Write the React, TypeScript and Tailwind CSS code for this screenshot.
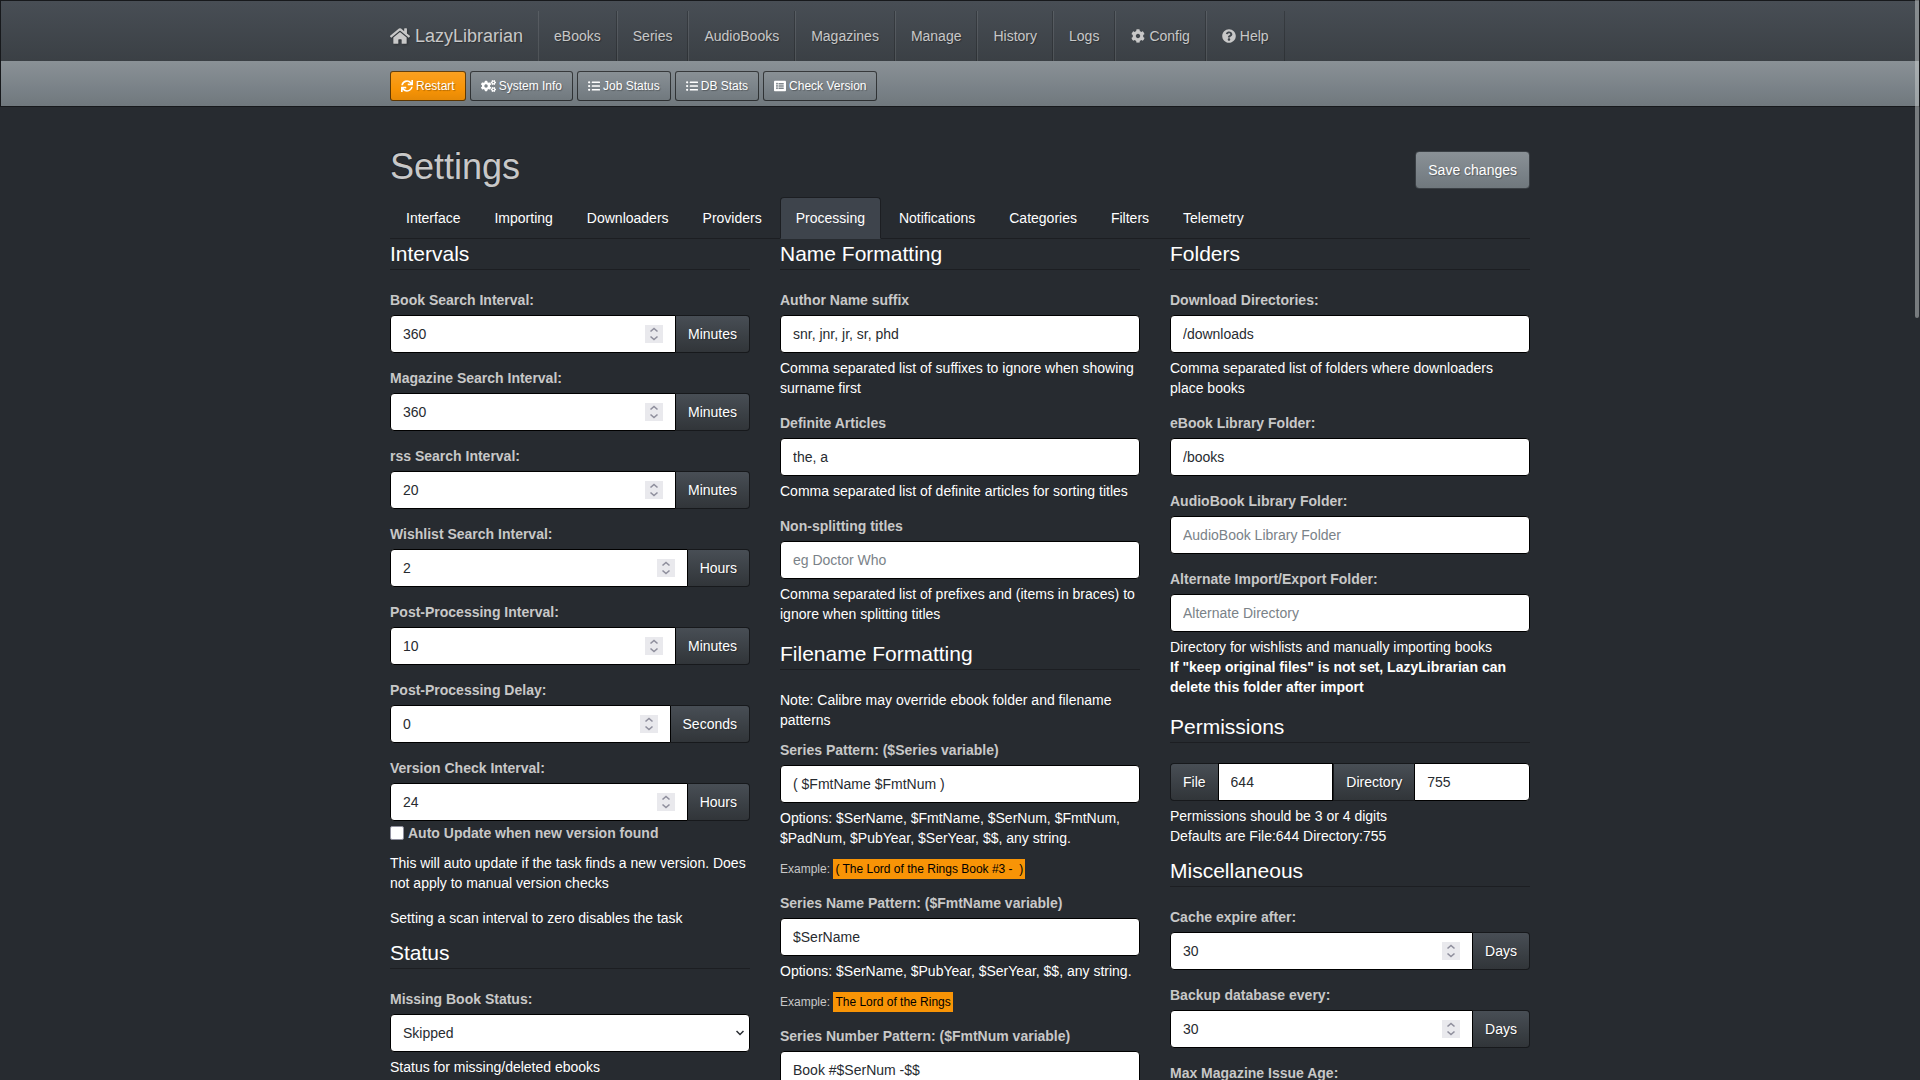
import React, { useId } from "react";
import { clsx } from "clsx";
import {
  FaCog,
  FaCogs,
  FaHome,
  FaListAlt,
  FaListUl,
  FaQuestionCircle,
  FaSync,
} from "react-icons/fa";

type NavLink = {
  title: string;
  icon?: React.ReactNode;
};

const navLinks: NavLink[] = [
  { title: "eBooks" },
  { title: "Series" },
  { title: "AudioBooks" },
  { title: "Magazines" },
  { title: "Manage" },
  { title: "History" },
  { title: "Logs" },
  { title: "Config", icon: <FaCog /> },
  { title: "Help", icon: <FaQuestionCircle /> },
];

const actions: NavLink[] = [
  { title: "System Info", icon: <FaCogs className="h-3 w-[15px]" /> },
  { title: "Job Status", icon: <FaListUl /> },
  { title: "DB Stats", icon: <FaListUl /> },
  { title: "Check Version", icon: <FaListAlt /> },
];

const tabs = [
  "Interface",
  "Importing",
  "Downloaders",
  "Providers",
  "Processing",
  "Notifications",
  "Categories",
  "Filters",
  "Telemetry",
];

const shadow = "[text-shadow:1px_1px_1px_rgba(0,0,0,0.3)]";
const defaultFill = "bg-[linear-gradient(#8a9196,#7a8288_60%,#70787d)]";
const addonFill = "bg-[linear-gradient(#484e55,#3a3f44_60%,#313539)]";
const control =
  "h-[38px] w-full min-w-0 border border-black bg-white px-3 text-sm leading-5 text-[#272b30] outline-none placeholder:text-[#7a8288] placeholder:opacity-100";

const Header = () => (
  <header className={clsx("border border-[#17191c]", addonFill, shadow)}>
    <div className="pt-2.5">
      <nav className="mx-auto flex max-w-[1140px] items-center">
        <a href="#" className="flex h-[50px] items-center gap-[5px] pr-[15px] text-lg leading-5">
          <FaHome className="h-[18px] w-5 drop-shadow-[1px_1px_1px_rgba(0,0,0,0.3)]" />
          LazyLibrarian
        </a>
        <ul className="flex">
          {navLinks.map((link) => (
            <li key={link.title}>
              <a
                href="#"
                className="flex h-[50px] items-center gap-1 border-r border-l border-r-black/20 border-l-white/10 px-[15px]"
              >
                {link.icon}
                {link.title}
              </a>
            </li>
          ))}
        </ul>
      </nav>
    </div>
    <div className={defaultFill}>
      <div className="mx-auto flex max-w-[1140px] gap-1 pt-2.5 pb-[5px] text-xs text-white">
        <button
          type="button"
          className={clsx(
            "flex h-[30px] items-center gap-[3px] rounded-[3px] border border-black/60 bg-[linear-gradient(#faa123,#f89406_60%,#e48806)] bg-origin-border px-2.5",
            shadow,
          )}
        >
          <FaSync />
          Restart
        </button>
        {actions.map((action) => (
          <button
            key={action.title}
            type="button"
            className={clsx(
              "flex h-[30px] items-center gap-[3px] rounded-[3px] border border-black/60 bg-origin-border px-2.5",
              defaultFill,
              shadow,
            )}
          >
            {action.icon}
            {action.title}
          </button>
        ))}
      </div>
    </div>
  </header>
);

const Tabs = () => (
  <ul className="flex gap-0.5 border-b border-[#1c1e22] text-white">
    {tabs.map((tab) => (
      <li key={tab} className="-mb-px">
        <a
          href="#"
          className={clsx(
            "block rounded-t-sm border px-[15px] py-2.5",
            tab === "Processing"
              ? "border-[#1c1e22] border-b-[#3e444c] bg-[#3e444c]"
              : "border-transparent",
          )}
        >
          {tab}
        </a>
      </li>
    ))}
  </ul>
);

type SectionProps = {
  title: string;
  children: React.ReactNode;
};

const Section = ({ title, children }: SectionProps) => (
  <section>
    <h2 className="mb-5 border-b border-[#1c1e22] text-[21px] leading-[30px] text-white">
      {title}
    </h2>
    {children}
  </section>
);

const Help = ({ children }: { children: React.ReactNode }) => (
  <p className="mt-[5px] text-white">{children}</p>
);

const Example = ({ children }: { children: React.ReactNode }) => (
  <p className="mt-2.5">
    <small className="text-xs leading-4">
      Example:{" "}
      <mark className="bg-[#f89406] px-0.5 py-[3px] whitespace-pre text-black">{children}</mark>
    </small>
  </p>
);

type FieldProps = {
  label: string;
  value?: string;
  placeholder?: string;
  children?: React.ReactNode;
};

const TextField = ({ label, value, placeholder, children }: FieldProps) => {
  const id = useId();
  return (
    <div className="mb-[15px]">
      <label htmlFor={id} className="mb-[5px] block font-bold">
        {label}
      </label>
      <input
        id={id}
        type="text"
        defaultValue={value}
        placeholder={placeholder}
        className={clsx(control, "block rounded-sm")}
      />
      {children}
    </div>
  );
};

const Addon = ({ className, ...props }: React.ComponentPropsWithoutRef<"span">) => (
  <span
    className={clsx(
      "flex h-[38px] items-center border border-[#17191c] px-3 text-white",
      addonFill,
      shadow,
      className,
    )}
    {...props}
  />
);

type NumberFieldProps = {
  label: string;
  value: string;
  unit: string;
  last?: boolean;
};

const NumberField = ({ label, value, unit, last }: NumberFieldProps) => {
  const id = useId();
  return (
    <div className={clsx(!last && "mb-[15px]")}>
      <label htmlFor={id} className="mb-[5px] block font-bold">
        {label}
      </label>
      <div className="flex">
        <div className="relative flex-1">
          <input
            id={id}
            type="number"
            defaultValue={value}
            className={clsx(
              control,
              "block appearance-none rounded-l-sm [&::-webkit-inner-spin-button]:appearance-none",
            )}
          />
          <svg
            viewBox="0 0 18 18"
            className="pointer-events-none absolute top-2.5 right-[13px] size-[18px] bg-[#e9e9ed]"
            fill="none"
            stroke="#8f8f9d"
            strokeWidth="1.6"
          >
            <path d="M5.5 6.5 9 3.5l3.5 3M5.5 11.5l3.5 3 3.5-3" />
          </svg>
        </div>
        <Addon className="rounded-r-sm border-l-0">{unit}</Addon>
      </div>
    </div>
  );
};

const SelectField = ({ label, value, children }: FieldProps) => {
  const id = useId();
  return (
    <div className="mb-[15px]">
      <label htmlFor={id} className="mb-[5px] block font-bold">
        {label}
      </label>
      <div className="relative">
        <select id={id} className={clsx(control, "block appearance-none rounded-sm")}>
          <option>{value}</option>
        </select>
        <svg
          viewBox="0 0 8 6"
          className="pointer-events-none absolute top-4 right-1.5 h-1.5 w-2"
          fill="none"
          stroke="#272b30"
          strokeWidth="1.5"
        >
          <path d="M.5 1 4 4.5 7.5 1" />
        </svg>
      </div>
      {children}
    </div>
  );
};

const IntervalsColumn = () => (
  <div>
    <Section title="Intervals">
      <NumberField label="Book Search Interval:" value="360" unit="Minutes" />
      <NumberField label="Magazine Search Interval:" value="360" unit="Minutes" />
      <NumberField label="rss Search Interval:" value="20" unit="Minutes" />
      <NumberField label="Wishlist Search Interval:" value="2" unit="Hours" />
      <NumberField label="Post-Processing Interval:" value="10" unit="Minutes" />
      <NumberField label="Post-Processing Delay:" value="0" unit="Seconds" />
      <NumberField label="Version Check Interval:" value="24" unit="Hours" last />
      <label className="mt-0.5 mb-2.5 flex items-center gap-1 font-bold">
        <input
          type="checkbox"
          className="size-3.5 appearance-none rounded-xs border border-[#8f8f9d] bg-white"
        />
        Auto Update when new version found
      </label>
      <p className="mb-[15px] text-white">
        This will auto update if the task finds a new version. Does not apply to manual version
        checks
      </p>
      <p className="mb-2.5 text-white">Setting a scan interval to zero disables the task</p>
    </Section>
    <Section title="Status">
      <SelectField label="Missing Book Status:" value="Skipped">
        <Help>Status for missing/deleted ebooks</Help>
      </SelectField>
    </Section>
  </div>
);

const FormattingColumn = () => (
  <div>
    <Section title="Name Formatting">
      <TextField label="Author Name suffix" value="snr, jnr, jr, sr, phd">
        <Help>Comma separated list of suffixes to ignore when showing surname first</Help>
      </TextField>
      <TextField label="Definite Articles" value="the, a">
        <Help>Comma separated list of definite articles for sorting titles</Help>
      </TextField>
      <TextField label="Non-splitting titles" placeholder="eg Doctor Who">
        <Help>
          Comma separated list of prefixes and (items in braces) to ignore when splitting titles
        </Help>
      </TextField>
    </Section>
    <Section title="Filename Formatting">
      <p className="mb-2.5 text-white">
        Note: Calibre may override ebook folder and filename patterns
      </p>
      <TextField label="Series Pattern: ($Series variable)" value="( $FmtName $FmtNum )">
        <Help>
          Options: $SerName, $FmtName, $SerNum, $FmtNum, $PadNum, $PubYear, $SerYear, $$, any
          string.
        </Help>
        <Example>{"( The Lord of the Rings Book #3 -  )"}</Example>
      </TextField>
      <TextField label="Series Name Pattern: ($FmtName variable)" value="$SerName">
        <Help>Options: $SerName, $PubYear, $SerYear, $$, any string.</Help>
        <Example>The Lord of the Rings</Example>
      </TextField>
      <TextField label="Series Number Pattern: ($FmtNum variable)" value="Book #$SerNum -$$" />
    </Section>
  </div>
);

const FoldersColumn = () => (
  <div>
    <Section title="Folders">
      <TextField label="Download Directories:" value="/downloads">
        <Help>Comma separated list of folders where downloaders place books</Help>
      </TextField>
      <TextField label="eBook Library Folder:" value="/books" />
      <TextField label="AudioBook Library Folder:" placeholder="AudioBook Library Folder" />
      <TextField label="Alternate Import/Export Folder:" placeholder="Alternate Directory">
        <Help>
          Directory for wishlists and manually importing books
          <br />
          <strong>
            If "keep original files" is not set, LazyLibrarian can delete this folder after import
          </strong>
        </Help>
      </TextField>
    </Section>
    <Section title="Permissions">
      <div className="flex">
        <Addon id="file-perm" className="rounded-l-sm border-r-0">
          File
        </Addon>
        <input
          type="text"
          aria-labelledby="file-perm"
          defaultValue="644"
          className={clsx(control, "flex-1")}
        />
        <Addon id="dir-perm" className="border-r-0">
          Directory
        </Addon>
        <input
          type="text"
          aria-labelledby="dir-perm"
          defaultValue="755"
          className={clsx(control, "flex-1 rounded-r-sm")}
        />
      </div>
      <div className="mb-2.5">
        <Help>
          Permissions should be 3 or 4 digits
          <br />
          Defaults are File:644 Directory:755
        </Help>
      </div>
    </Section>
    <Section title="Miscellaneous">
      <NumberField label="Cache expire after:" value="30" unit="Days" />
      <NumberField label="Backup database every:" value="30" unit="Days" />
      <NumberField label="Max Magazine Issue Age:" value="0" unit="Days" />
    </Section>
  </div>
);

export default function App() {
  return (
    <div className="h-screen overflow-y-auto bg-[#272b30] font-['Liberation_Sans',Arial,sans-serif] text-sm leading-5 text-[#c8c8c8] [scrollbar-width:none]">
      <Header />
      <main className="mx-auto max-w-[1140px] pt-10">
        <div className="mb-2 flex items-start justify-between">
          <h1 className="text-4xl leading-10 [text-shadow:-1px_-1px_0_rgba(0,0,0,0.3)]">
            Settings
          </h1>
          <button
            type="button"
            className={clsx(
              "mt-1 h-[38px] rounded-sm border border-[#3a3f44] px-3 text-white",
              defaultFill,
              shadow,
            )}
          >
            Save changes
          </button>
        </div>
        <Tabs />
        <form className="grid grid-cols-3 gap-[30px]">
          <IntervalsColumn />
          <FormattingColumn />
          <FoldersColumn />
        </form>
      </main>
      {/* overlay scrollbar thumb */}
      <div className="pointer-events-none fixed top-0 right-px h-[318px] w-1 rounded-b-sm bg-[#c8cccc]/50" />
    </div>
  );
}
